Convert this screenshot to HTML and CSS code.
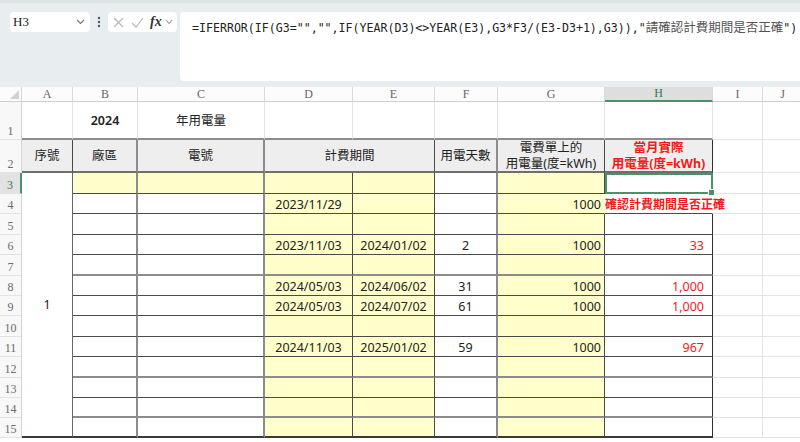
FILE: index.html
```html
<!DOCTYPE html>
<html lang="zh-Hant">
<head>
    <meta charset="UTF-8" />
    <meta name="viewport" content="width=device-width, initial-scale=1" />
    <title>年用電量</title>
    <link rel="stylesheet" href="styles.css">
</head>
<body>
    <div class="toolbar">
        <div class="namebox">
            <span>H3</span>
            <svg width="9" height="6" viewBox="0 0 9 6"><polyline points="1,1 4.5,4.5 8,1" fill="none" stroke="#777" stroke-width="1.2"/></svg>
        </div>
        <div class="dots">
            <svg width="4" height="12" viewBox="0 0 4 12"><circle cx="2" cy="2" r="1.2" fill="#555"/><circle cx="2" cy="6" r="1.2" fill="#555"/><circle cx="2" cy="10" r="1.2" fill="#555"/></svg>
        </div>
        <div class="fxbox">
            <svg width="11" height="11" viewBox="0 0 11 11"><path d="M1 1L10 10M10 1L1 10" stroke="#b9b9b9" stroke-width="1.2"/></svg>
            <svg width="13" height="11" viewBox="0 0 13 11"><polyline points="1,6 5,10 12,1" fill="none" stroke="#b9b9b9" stroke-width="1.2"/></svg>
            <i class="fx">fx</i>
            <svg width="8" height="6" viewBox="0 0 8 6"><polyline points="1,1 4,4.5 7,1" fill="none" stroke="#999" stroke-width="1.1"/></svg>
        </div>
        <div class="formula">=IFERROR(IF(G3="","",IF(YEAR(D3)&lt;&gt;YEAR(E3),G3*F3/(E3-D3+1),G3)),"<span class="cjk">請確認計費期間是否正確</span>")</div>
    </div>

    <div class="sheet">
        <div class="row">
            <div class="corner"></div>
            <div class="ch">A</div>
            <div class="ch">B</div>
            <div class="ch">C</div>
            <div class="ch">D</div>
            <div class="ch">E</div>
            <div class="ch">F</div>
            <div class="ch">G</div>
            <div class="ch on">H</div>
            <div class="ch">I</div>
            <div class="ch">J</div>
        </div>

        <div class="row first">
            <div class="rh">1</div>
            <div class="c top"></div>
            <div class="c top mid year">2024</div>
            <div class="c top mid">年用電量</div>
            <div class="c top"></div>
            <div class="c top"></div>
            <div class="c top"></div>
            <div class="c top"></div>
            <div class="c top"></div>
            <div class="c"></div>
            <div class="c"></div>
        </div>

        <div class="row head">
            <div class="rh">2</div>
            <div class="c t hd mid">序號</div>
            <div class="c t hd mid k">廠區</div>
            <div class="c t hd mid k">電號</div>
            <div class="c t hd mid span2">計費期間</div>
            <div class="c t hd mid k">用電天數</div>
            <div class="c t hd mid two">電費單上的<br>用電量(度=kWh)</div>
            <div class="c t hd mid two h red bold">當月實際<br>用電量(度=kWh)</div>
            <div class="c"></div>
            <div class="c"></div>
        </div>

        <div class="row">
            <div class="rh on">3</div>
            <div class="c t merge">1</div>
            <div class="c t y k"></div>
            <div class="c t y k"></div>
            <div class="c t y"></div>
            <div class="c t y"></div>
            <div class="c t k"></div>
            <div class="c t y"></div>
            <div class="c t h sel"></div>
            <div class="c"></div>
            <div class="c"></div>
        </div>

        <div class="row">
            <div class="rh">4</div>
            <div class="c t k"></div>
            <div class="c t k"></div>
            <div class="c t y ctr">2023/11/29</div>
            <div class="c t y"></div>
            <div class="c t k"></div>
            <div class="c t y num nr">1000</div>
            <div class="c t over">確認計費期間是否正確</div>
            <div class="c"></div>
            <div class="c"></div>
        </div>

        <div class="row">
            <div class="rh">5</div>
            <div class="c t k"></div>
            <div class="c t k"></div>
            <div class="c t y"></div>
            <div class="c t y"></div>
            <div class="c t k"></div>
            <div class="c t y"></div>
            <div class="c t h"></div>
            <div class="c"></div>
            <div class="c"></div>
        </div>

        <div class="row">
            <div class="rh">6</div>
            <div class="c t k"></div>
            <div class="c t k"></div>
            <div class="c t y ctr">2023/11/03</div>
            <div class="c t y ctr">2024/01/02</div>
            <div class="c t k ctr">2</div>
            <div class="c t y num">1000</div>
            <div class="c t h num red">33</div>
            <div class="c"></div>
            <div class="c"></div>
        </div>

        <div class="row kb">
            <div class="rh">7</div>
            <div class="c t k"></div>
            <div class="c t k"></div>
            <div class="c t y"></div>
            <div class="c t y"></div>
            <div class="c t k"></div>
            <div class="c t y"></div>
            <div class="c t h"></div>
            <div class="c"></div>
            <div class="c"></div>
        </div>

        <div class="row">
            <div class="rh">8</div>
            <div class="c t k"></div>
            <div class="c t k"></div>
            <div class="c t y ctr">2024/05/03</div>
            <div class="c t y ctr">2024/06/02</div>
            <div class="c t k ctr">31</div>
            <div class="c t y num">1000</div>
            <div class="c t h num red">1,000</div>
            <div class="c"></div>
            <div class="c"></div>
        </div>

        <div class="row">
            <div class="rh">9</div>
            <div class="c t k"></div>
            <div class="c t k"></div>
            <div class="c t y ctr">2024/05/03</div>
            <div class="c t y ctr">2024/07/02</div>
            <div class="c t k ctr">61</div>
            <div class="c t y num">1000</div>
            <div class="c t h num red">1,000</div>
            <div class="c"></div>
            <div class="c"></div>
        </div>

        <div class="row">
            <div class="rh">10</div>
            <div class="c t k"></div>
            <div class="c t k"></div>
            <div class="c t y"></div>
            <div class="c t y"></div>
            <div class="c t k"></div>
            <div class="c t y"></div>
            <div class="c t h"></div>
            <div class="c"></div>
            <div class="c"></div>
        </div>

        <div class="row">
            <div class="rh">11</div>
            <div class="c t k"></div>
            <div class="c t k"></div>
            <div class="c t y ctr">2024/11/03</div>
            <div class="c t y ctr">2025/01/02</div>
            <div class="c t k ctr">59</div>
            <div class="c t y num">1000</div>
            <div class="c t h num red">967</div>
            <div class="c"></div>
            <div class="c"></div>
        </div>

        <div class="row kb">
            <div class="rh">12</div>
            <div class="c t k"></div>
            <div class="c t k"></div>
            <div class="c t y"></div>
            <div class="c t y"></div>
            <div class="c t k"></div>
            <div class="c t y"></div>
            <div class="c t h"></div>
            <div class="c"></div>
            <div class="c"></div>
        </div>

        <div class="row">
            <div class="rh">13</div>
            <div class="c t k"></div>
            <div class="c t k"></div>
            <div class="c t y"></div>
            <div class="c t y"></div>
            <div class="c t k"></div>
            <div class="c t y"></div>
            <div class="c t h"></div>
            <div class="c"></div>
            <div class="c"></div>
        </div>

        <div class="row kb">
            <div class="rh">14</div>
            <div class="c t k"></div>
            <div class="c t k"></div>
            <div class="c t y"></div>
            <div class="c t y"></div>
            <div class="c t k"></div>
            <div class="c t y"></div>
            <div class="c t h"></div>
            <div class="c"></div>
            <div class="c"></div>
        </div>

        <div class="row last">
            <div class="rh">15</div>
            <div class="c t k"></div>
            <div class="c t k"></div>
            <div class="c t y"></div>
            <div class="c t y"></div>
            <div class="c t k"></div>
            <div class="c t y"></div>
            <div class="c t h"></div>
            <div class="c"></div>
            <div class="c"></div>
        </div>
    </div>
</body>
</html>
```

FILE: styles.css
```css
body {
    margin: 0;
    width: 800px;
    height: 442px;
    overflow: hidden;
    background: #fff;
    font-family: "Noto Sans", "Noto Sans CJK TC", sans-serif;
    color: #222;
}

/* formula bar */
.toolbar {
    box-sizing: border-box;
    height: 87px;
    display: flex;
    align-items: flex-start;
    padding: 12px 0 0 10px;
    background: #e8edf0;
    border-top: 3px solid #dde2e5;
}
.namebox {
    box-sizing: border-box;
    width: 80px;
    height: 20px;
    margin-top: -3px;
    display: flex;
    align-items: center;
    justify-content: space-between;
    padding: 0 5px 0 3px;
    background: #fff;
    border-radius: 4px;
    font: 13px "Liberation Serif", serif;
    color: #222;
}
.dots {
    width: 18px;
    height: 20px;
    margin-top: -3px;
    display: flex;
    align-items: center;
    justify-content: center;
}
.fxbox {
    box-sizing: border-box;
    width: 69px;
    height: 20px;
    margin-top: -3px;
    display: flex;
    align-items: center;
    gap: 7px;
    padding: 0 3px 0 5px;
    background: #fff;
    border-radius: 4px;
}
.fx {
    font: italic bold 14px "Liberation Serif", serif;
    color: #333;
    margin-left: -1px;
    margin-right: -4px;
}
.formula {
    box-sizing: border-box;
    flex: 1;
    height: 69px;
    margin-top: -3px;
    margin-left: 3px;
    padding: 5px 0 0 12px;
    background: #fff;
    border-radius: 4px 0 0 4px;
    font: 11.6px/16px "DejaVu Sans Mono", monospace;
    color: #222;
    white-space: nowrap;
}
.formula .cjk {
    font: 12.5px "Noto Sans CJK TC", sans-serif;
    color: #555;
}

/* sheet grid */
.sheet {
    display: grid;
    grid-template-columns: 22px 51px 65px 127px 88px 82px 63px 107px 108px 50px 40px;
    grid-template-rows: 15px 38px 33px 21px 20px 21px 20px 21px 20px 20px 21px 20px 21px 20px 20px 20px;
    font-size: 12.5px;
}
.row {
    display: contents;
}
.corner {
    box-sizing: border-box;
    display: flex;
    align-items: flex-end;
    justify-content: flex-end;
    padding: 0 2px 2px 0;
    border-right: 1px solid #d6d6d6;
    border-bottom: 1px solid #d0d0d0;
    background: #fcfcfc;
}
.corner::after {
    content: "";
    border-left: 9px solid transparent;
    border-bottom: 9px solid #d2d2d2;
}
.ch {
    box-sizing: border-box;
    display: flex;
    align-items: center;
    justify-content: center;
    border-right: 1px solid #dadada;
    border-bottom: 1px solid #d0d0d0;
    background: #fcfcfc;
    font: 12px "Liberation Serif", serif;
    color: #666;
}
.ch.on {
    background: #dedede;
    border-bottom: 2px solid #4b9169;
    color: #3f6f52;
}
.rh {
    box-sizing: border-box;
    display: flex;
    align-items: flex-end;
    justify-content: center;
    border-right: 1px solid #d6d6d6;
    border-bottom: 1px solid #e3e3e3;
    background: #f8f8f8;
    font: 12px/15px "Liberation Serif", serif;
    color: #6b6b6b;
}
.rh.on {
    background: #e2e2e2;
    border-right: 2px solid #4b9169;
    color: #3f6f52;
}

/* cells */
.c {
    box-sizing: border-box;
    display: flex;
    align-items: flex-end;
    padding: 0 3px;
    border-right: 1px solid #e3e3e3;
    border-bottom: 1px solid #e3e3e3;
    line-height: 17px;
    white-space: nowrap;
    overflow: hidden;
}
.c.top {
    border-bottom: 2px solid #8c8c8c;
}
.t {
    border-right-color: #4a4a4a;
    border-bottom-color: #4a4a4a;
}
.k {
    border-right: 2px solid #8c8c8c;
}
.h {
    border-right-color: #2e2e2e;
}
.nr {
    border-right-color: transparent;
}
.row.head > .t {
    border-bottom: 2px solid #6e6e6e;
}
.row.kb > .t {
    border-bottom: 2px solid #8c8c8c;
}
.row.last > .t,
.merge {
    border-bottom: 2px solid #3a3a3a;
}
.y {
    background: #ffffcc;
}
.hd {
    background: #eeeeee;
}
.mid {
    align-items: center;
    justify-content: center;
    text-align: center;
}
.two {
    line-height: 16px;
}
.span2 {
    grid-column: span 2;
}
.year {
    font-weight: 600;
}
.ctr {
    justify-content: center;
}
.num {
    justify-content: flex-end;
}
.h.num {
    padding-right: 8px;
}
.red {
    color: #f41a1a;
}
.bold {
    font-weight: bold;
}
.merge {
    grid-row: span 13;
    align-items: center;
    justify-content: center;
    border-right-color: #666;
}

/* active cell */
.sel {
    position: relative;
    z-index: 2;
    overflow: visible;
    outline: 2px solid #4b9169;
    outline-offset: -2px;
}
.sel::after {
    content: "";
    position: absolute;
    right: -3px;
    bottom: -3px;
    width: 5px;
    height: 5px;
    background: #4b9169;
    border: 1px solid #fff;
}

/* text spilling into the next column */
.over {
    position: relative;
    z-index: 1;
    overflow: visible;
    padding-left: 0;
    border-right-color: transparent;
    font-size: 12px;
    color: #f41a1a;
    font-weight: bold;
}
```
